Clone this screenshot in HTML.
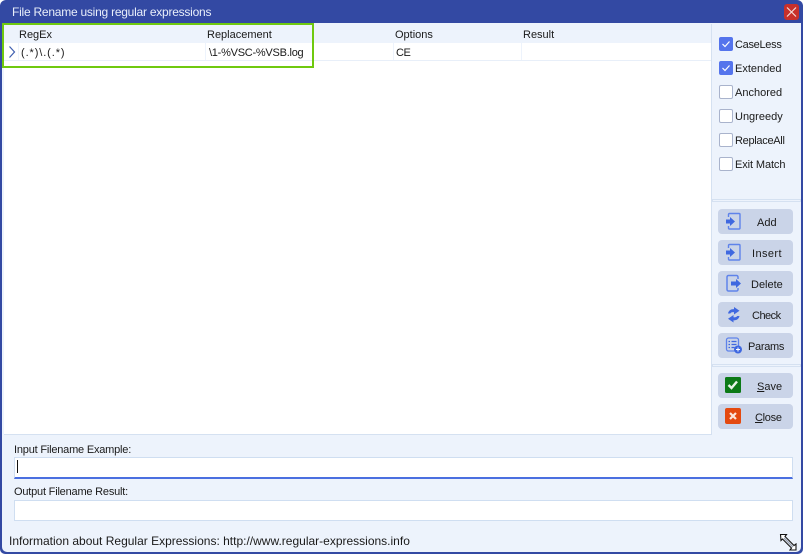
<!DOCTYPE html>
<html><head><meta charset="utf-8"><style>
html,body{margin:0;padding:0}
body{width:803px;height:554px;overflow:hidden;background:#fff;font:11px "Liberation Sans",sans-serif;color:#1a1a1a}
.a{position:absolute;white-space:nowrap}
#w{position:absolute;left:0;top:0;width:803px;height:554px;background:#3349a3;border-radius:6px 6px 5px 5px;overflow:hidden}
#c{position:absolute;left:2px;top:23px;width:799px;height:529px;background:#edf3fc;border-radius:0 0 5px 5px}
.t{line-height:16px;height:16px}
.b{position:absolute;left:718px;width:75px;height:25px;background:#cad4e8;border-radius:4px}
.cb{position:absolute;left:719px;width:12px;height:12px;border:1px solid #a9b3cc;background:#fff;border-radius:2px}
.cb.on{background:#5574ec;border-color:#5574ec}
.cb svg{position:absolute;left:0;top:0}
.i{position:absolute;left:0;top:0}
u{text-decoration:underline}
</style></head><body>
<div id="w">
<div class="a t" style="left:12px;top:5px;line-height:14px;color:#e8eefa;font-size:12px;letter-spacing:-.24px">File Rename using regular expressions</div>
<div class="a" style="left:784px;top:4px;width:15px;height:16px;background:#c8302a;border-radius:3px"></div>
<svg class="a" style="left:784px;top:4px" width="15" height="16"><path d="M3 3.500l9 9M12 3.500l-9 9" stroke="#f6dcd8" stroke-width="1.200"/></svg>
<div id="c"></div>

<!-- grid -->
<div class="a" style="left:4px;top:24px;width:707px;height:410px;background:#fff;border-right:1px solid #d5e1f1;border-bottom:1px solid #d5e1f1"></div>
<div class="a" style="left:4px;top:24px;width:707px;height:19px;background:#edf3fc"></div>
<div class="a" style="left:4px;top:60px;width:707px;height:1px;background:#e8eff9"></div>
<div class="a" style="left:18px;top:43px;width:1px;height:17px;background:#edf3fc"></div>
<div class="a" style="left:205px;top:43px;width:1px;height:17px;background:#edf3fc"></div>
<div class="a" style="left:393px;top:43px;width:1px;height:17px;background:#edf3fc"></div>
<div class="a" style="left:521px;top:43px;width:1px;height:17px;background:#edf3fc"></div>
<div class="a t" style="left:19px;top:27px">RegEx</div>
<div class="a t" style="left:207px;top:27px">Replacement</div>
<div class="a t" style="left:395px;top:27px">Options</div>
<div class="a t" style="left:523px;top:27px">Result</div>
<svg class="a" style="left:7px;top:45px" width="10" height="14"><path d="M2.500 1.500l5 5.500-5 5.500" fill="none" stroke="#3f5fb0" stroke-width="1.200"/></svg>
<div class="a t" style="left:21px;top:45px;letter-spacing:.9px">(.*)\.(.*)</div>
<div class="a t" style="left:209px;top:45px;letter-spacing:-.25px">\1-%VSC-%VSB.log</div>
<div class="a t" style="left:396px;top:45px;letter-spacing:-.5px">CE</div>
<div class="a" style="left:2px;top:23px;width:308px;height:41px;border:2px solid #6fc90f"></div>

<!-- right panel -->
<div class="a" style="left:712px;top:199px;width:87px;height:1px;border:1px solid #d5e1f1"></div>
<div class="a" style="left:712px;top:364px;width:87px;height:1px;border:1px solid #d5e1f1"></div>

<div class="cb on" style="top:37px"><svg width="12" height="12"><path d="M2.500 6l2.500 2.500 4.500-5" fill="none" stroke="#fff" stroke-width="1.200"/></svg></div>
<div class="a t" style="left:735px;top:37px;letter-spacing:-.3px">CaseLess</div>
<div class="cb on" style="top:61px"><svg width="12" height="12"><path d="M2.500 6l2.500 2.500 4.500-5" fill="none" stroke="#fff" stroke-width="1.200"/></svg></div>
<div class="a t" style="left:735px;top:61px">Extended</div>
<div class="cb" style="top:85px"></div>
<div class="a t" style="left:735px;top:85px">Anchored</div>
<div class="cb" style="top:109px"></div>
<div class="a t" style="left:735px;top:109px">Ungreedy</div>
<div class="cb" style="top:133px"></div>
<div class="a t" style="left:735px;top:133px;letter-spacing:-.3px">ReplaceAll</div>
<div class="cb" style="top:157px"></div>
<div class="a t" style="left:735px;top:157px;letter-spacing:-.1px">Exit Match</div>

<!-- buttons -->
<div class="b" style="top:209px"><svg class="i" width="30" height="25"><path d="M10.500 8V5.500a1 1 0 0 1 1-1h9.500a1 1 0 0 1 1 1v13.500a1 1 0 0 1-1 1h-9.500a1 1 0 0 1-1-1V17" fill="none" stroke="#5f83ea" stroke-width="1.400"/><path d="M8 10.500h4V8l5 4.500-5 4.500v-2.500H8z" fill="#3f68e0"/></svg><div class="a t" style="left:39px;top:6px">Add</div></div>
<div class="b" style="top:240px"><svg class="i" width="30" height="25"><path d="M10.500 8V5.500a1 1 0 0 1 1-1h9.500a1 1 0 0 1 1 1v13.500a1 1 0 0 1-1 1h-9.500a1 1 0 0 1-1-1V17" fill="none" stroke="#5f83ea" stroke-width="1.400"/><path d="M8 10.500h4V8l5 4.500-5 4.500v-2.500H8z" fill="#3f68e0"/></svg><div class="a t" style="left:34px;top:6px;letter-spacing:.4px">Insert</div></div>
<div class="b" style="top:271px"><svg class="i" width="30" height="25"><path d="M20 8V6a1.500 1.500 0 0 0-1.500-1.500h-8A1.500 1.500 0 0 0 9 6v12.500a1.500 1.500 0 0 0 1.500 1.500h8a1.500 1.500 0 0 0 1.500-1.500V17" fill="none" stroke="#5f83ea" stroke-width="1.500"/><path d="M13 10.500h5V8l5 4.500-5 4.500v-2.500h-5z" fill="#3f68e0"/></svg><div class="a t" style="left:33px;top:6px">Delete</div></div>
<div class="b" style="top:302px"><svg class="i" width="30" height="25"><path d="M10 11.500c.6-3 3-4.500 6-4.300V5l5.500 3.800-5.500 3.700v-2.300c-1.700-.2-3 .1-3.700 1.300z" fill="#3f68e0"/><path d="M21.500 14c-.6 3-3 4.500-6 4.300V20.500L10 16.700l5.500-3.700v2.300c1.700.2 3-.1 3.700-1.300z" fill="#3f68e0"/></svg><div class="a t" style="left:34px;top:6px;letter-spacing:-.5px">Check</div></div>
<div class="b" style="top:333px"><svg class="i" width="30" height="25"><rect x="8.500" y="5" width="12" height="13" rx="2" fill="none" stroke="#5f83ea" stroke-width="1.300"/><path d="M10.500 8.500h1.500M13.500 8.500h5M10.500 11.500h1.500M13.500 11.500h5M10.500 14.500h1.500M13.500 14.500h3" stroke="#3f68e0" stroke-width="1.300"/><circle cx="20" cy="16.500" r="4" fill="#3f68e0"/><path d="M18 16.500h4M20 14.500v4" stroke="#fff" stroke-width="1"/></svg><div class="a t" style="left:30px;top:6px;letter-spacing:-.3px">Params</div></div>
<div class="b" style="top:373px"><svg class="i" width="30" height="25"><rect x="7" y="4" width="16" height="16" rx="1.500" fill="#0c7a17"/><path d="M10.500 12l3 3 5.500-6.500" fill="none" stroke="#e8f4e8" stroke-width="2.400"/></svg><div class="a t" style="left:39px;top:6px"><u>S</u>ave</div></div>
<div class="b" style="top:404px"><svg class="i" width="30" height="25"><rect x="7" y="4" width="16" height="16" rx="2" fill="#e4490f"/><path d="M12 9l6 6M18 9l-6 6" stroke="#fbe6dc" stroke-width="2.200"/></svg><div class="a t" style="left:37px;top:6px;letter-spacing:-.3px"><u>C</u>lose</div></div>

<!-- bottom -->
<div class="a t" style="left:14px;top:442px;letter-spacing:-.2px">Input Filename Example:</div>
<div class="a" style="left:14px;top:457px;width:777px;height:19px;background:#fff;border:1px solid #cfdef1;border-bottom:2px solid #4a6fe0"></div>
<div class="a" style="left:17px;top:460px;width:1px;height:13px;background:#111"></div>
<div class="a t" style="left:14px;top:484px;letter-spacing:-.2px">Output Filename Result:</div>
<div class="a" style="left:14px;top:500px;width:777px;height:19px;background:#fff;border:1px solid #cfdef1"></div>
<div class="a t" style="left:9px;top:534px;line-height:14px;font-size:12px">Information about Regular Expressions: http://www.regular-expressions.info</div>
<svg class="a" style="left:779px;top:533px" width="19" height="18"><path d="M1.500 1.500h6L6 3.500l9 9 2-1.500v6h-6l1.500-2-9-9-1.500 1.500z" fill="#fff" stroke="#111" stroke-width="1.100"/><path d="M5 5l9 9" stroke="#9aa3b5" stroke-width="1.500"/></svg>
</div>
</body></html>
